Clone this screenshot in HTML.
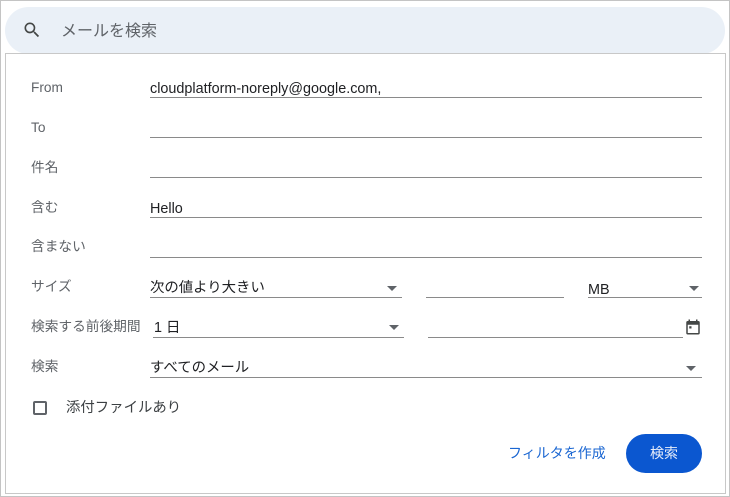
<!DOCTYPE html>
<html><head><meta charset="utf-8"><style>
*{margin:0;padding:0;box-sizing:border-box}
body{width:730px;height:497px;background:#fff;position:relative;overflow:hidden;font-family:"Liberation Sans","Noto Sans CJK JP",sans-serif}
.a{position:absolute}
.lab{position:absolute;left:31px;font-size:13.7px;color:#5f6368;line-height:16px}
.val{position:absolute;font-size:14.4px;color:#202124;line-height:16px;margin-top:1px}
.ul{position:absolute;height:1px;background:#8a8a8a}
.tri{position:absolute;width:0;height:0;border-left:5px solid transparent;border-right:5px solid transparent;border-top:5px solid #5f6368}
</style></head><body>
<div class="a" style="left:0;top:0;width:730px;height:497px;border:1px solid #c4c4c4;z-index:10;pointer-events:none"></div>
<div class="a" style="left:5px;top:7px;width:720px;height:47px;background:#eaf0f7;border-radius:24px"></div>
<svg class="a" style="left:22px;top:20px" width="20" height="20" viewBox="0 0 24 24"><path d="M15.5 14h-.79l-.28-.27A6.470 6.470 0 0 0 16 9.5 6.5 6.5 0 1 0 9.5 16c1.61 0 3.09-.59 4.230-1.57l.27.28v.79l5 4.99L20.49 19l-4.99-5zm-6 0C7.01 14 5 11.990 5 9.5S7.01 5 9.5 5 14 7.01 14 9.5 11.99 14 9.5 14z" fill="#444746"/></svg>
<div class="a" style="left:61px;top:22px;font-size:16px;color:#5f6368;line-height:20px">メールを検索</div>
<div class="a" style="left:5px;top:53px;width:721px;height:441px;background:#fff;border:1px solid #c8c8c8"></div>

<div class="lab" style="top:80px">From</div>
<div class="val" style="left:150px;top:80px">cloudplatform-noreply@google.com,</div>
<div class="ul" style="left:150px;top:97px;width:552px"></div>

<div class="lab" style="top:120px">To</div>
<div class="ul" style="left:150px;top:137px;width:552px"></div>

<div class="lab" style="top:160px">件名</div>
<div class="ul" style="left:150px;top:177px;width:552px"></div>

<div class="lab" style="top:200px">含む</div>
<div class="val" style="left:150px;top:200px">Hello</div>
<div class="ul" style="left:150px;top:217px;width:552px"></div>

<div class="lab" style="top:239px">含まない</div>
<div class="ul" style="left:150px;top:257px;width:552px"></div>

<div class="lab" style="top:279px">サイズ</div>
<div class="val" style="left:150px;top:279px">次の値より大きい</div>
<div class="tri" style="left:387px;top:286px"></div>
<div class="ul" style="left:150px;top:297px;width:252px"></div>
<div class="ul" style="left:426px;top:297px;width:138px"></div>
<div class="val" style="left:588px;top:281px">MB</div>
<div class="tri" style="left:689px;top:286px"></div>
<div class="ul" style="left:588px;top:297px;width:114px"></div>

<div class="lab" style="top:319px">検索する前後期間</div>
<div class="val" style="left:154px;top:319px">1 日</div>
<div class="tri" style="left:389px;top:325px"></div>
<div class="ul" style="left:153px;top:337px;width:251px"></div>
<div class="ul" style="left:428px;top:337px;width:255px"></div>
<svg class="a" style="left:684px;top:318px" width="18" height="18" viewBox="0 0 24 24"><path d="M19 4h-1V2h-2v2H8V2H6v2H5a2 2 0 0 0-2 2v14a2 2 0 0 0 2 2h14a2 2 0 0 0 2-2V6a2 2 0 0 0-2-2zm0 16H5V9h14v11z" fill="#444746"/><rect x="7" y="11" width="3" height="3" fill="#444746"/></svg>

<div class="lab" style="top:359px">検索</div>
<div class="val" style="left:150px;top:359px">すべてのメール</div>
<div class="tri" style="left:686px;top:366px"></div>
<div class="ul" style="left:150px;top:377px;width:552px"></div>

<div class="a" style="left:33px;top:401px;width:14px;height:14px;border:2px solid #5f6368;border-radius:2px"></div>
<div class="val" style="left:66px;top:399px;color:#3c4043">添付ファイルあり</div>

<div class="a" style="left:508px;top:445px;font-size:14px;color:#1a66d2;line-height:16px">フィルタを作成</div>
<div class="a" style="left:626px;top:434px;width:76px;height:39px;border-radius:20px;background:#0b57d0;color:#e8eefa;font-size:14px;line-height:39px;text-align:center">検索</div>
</body></html>
